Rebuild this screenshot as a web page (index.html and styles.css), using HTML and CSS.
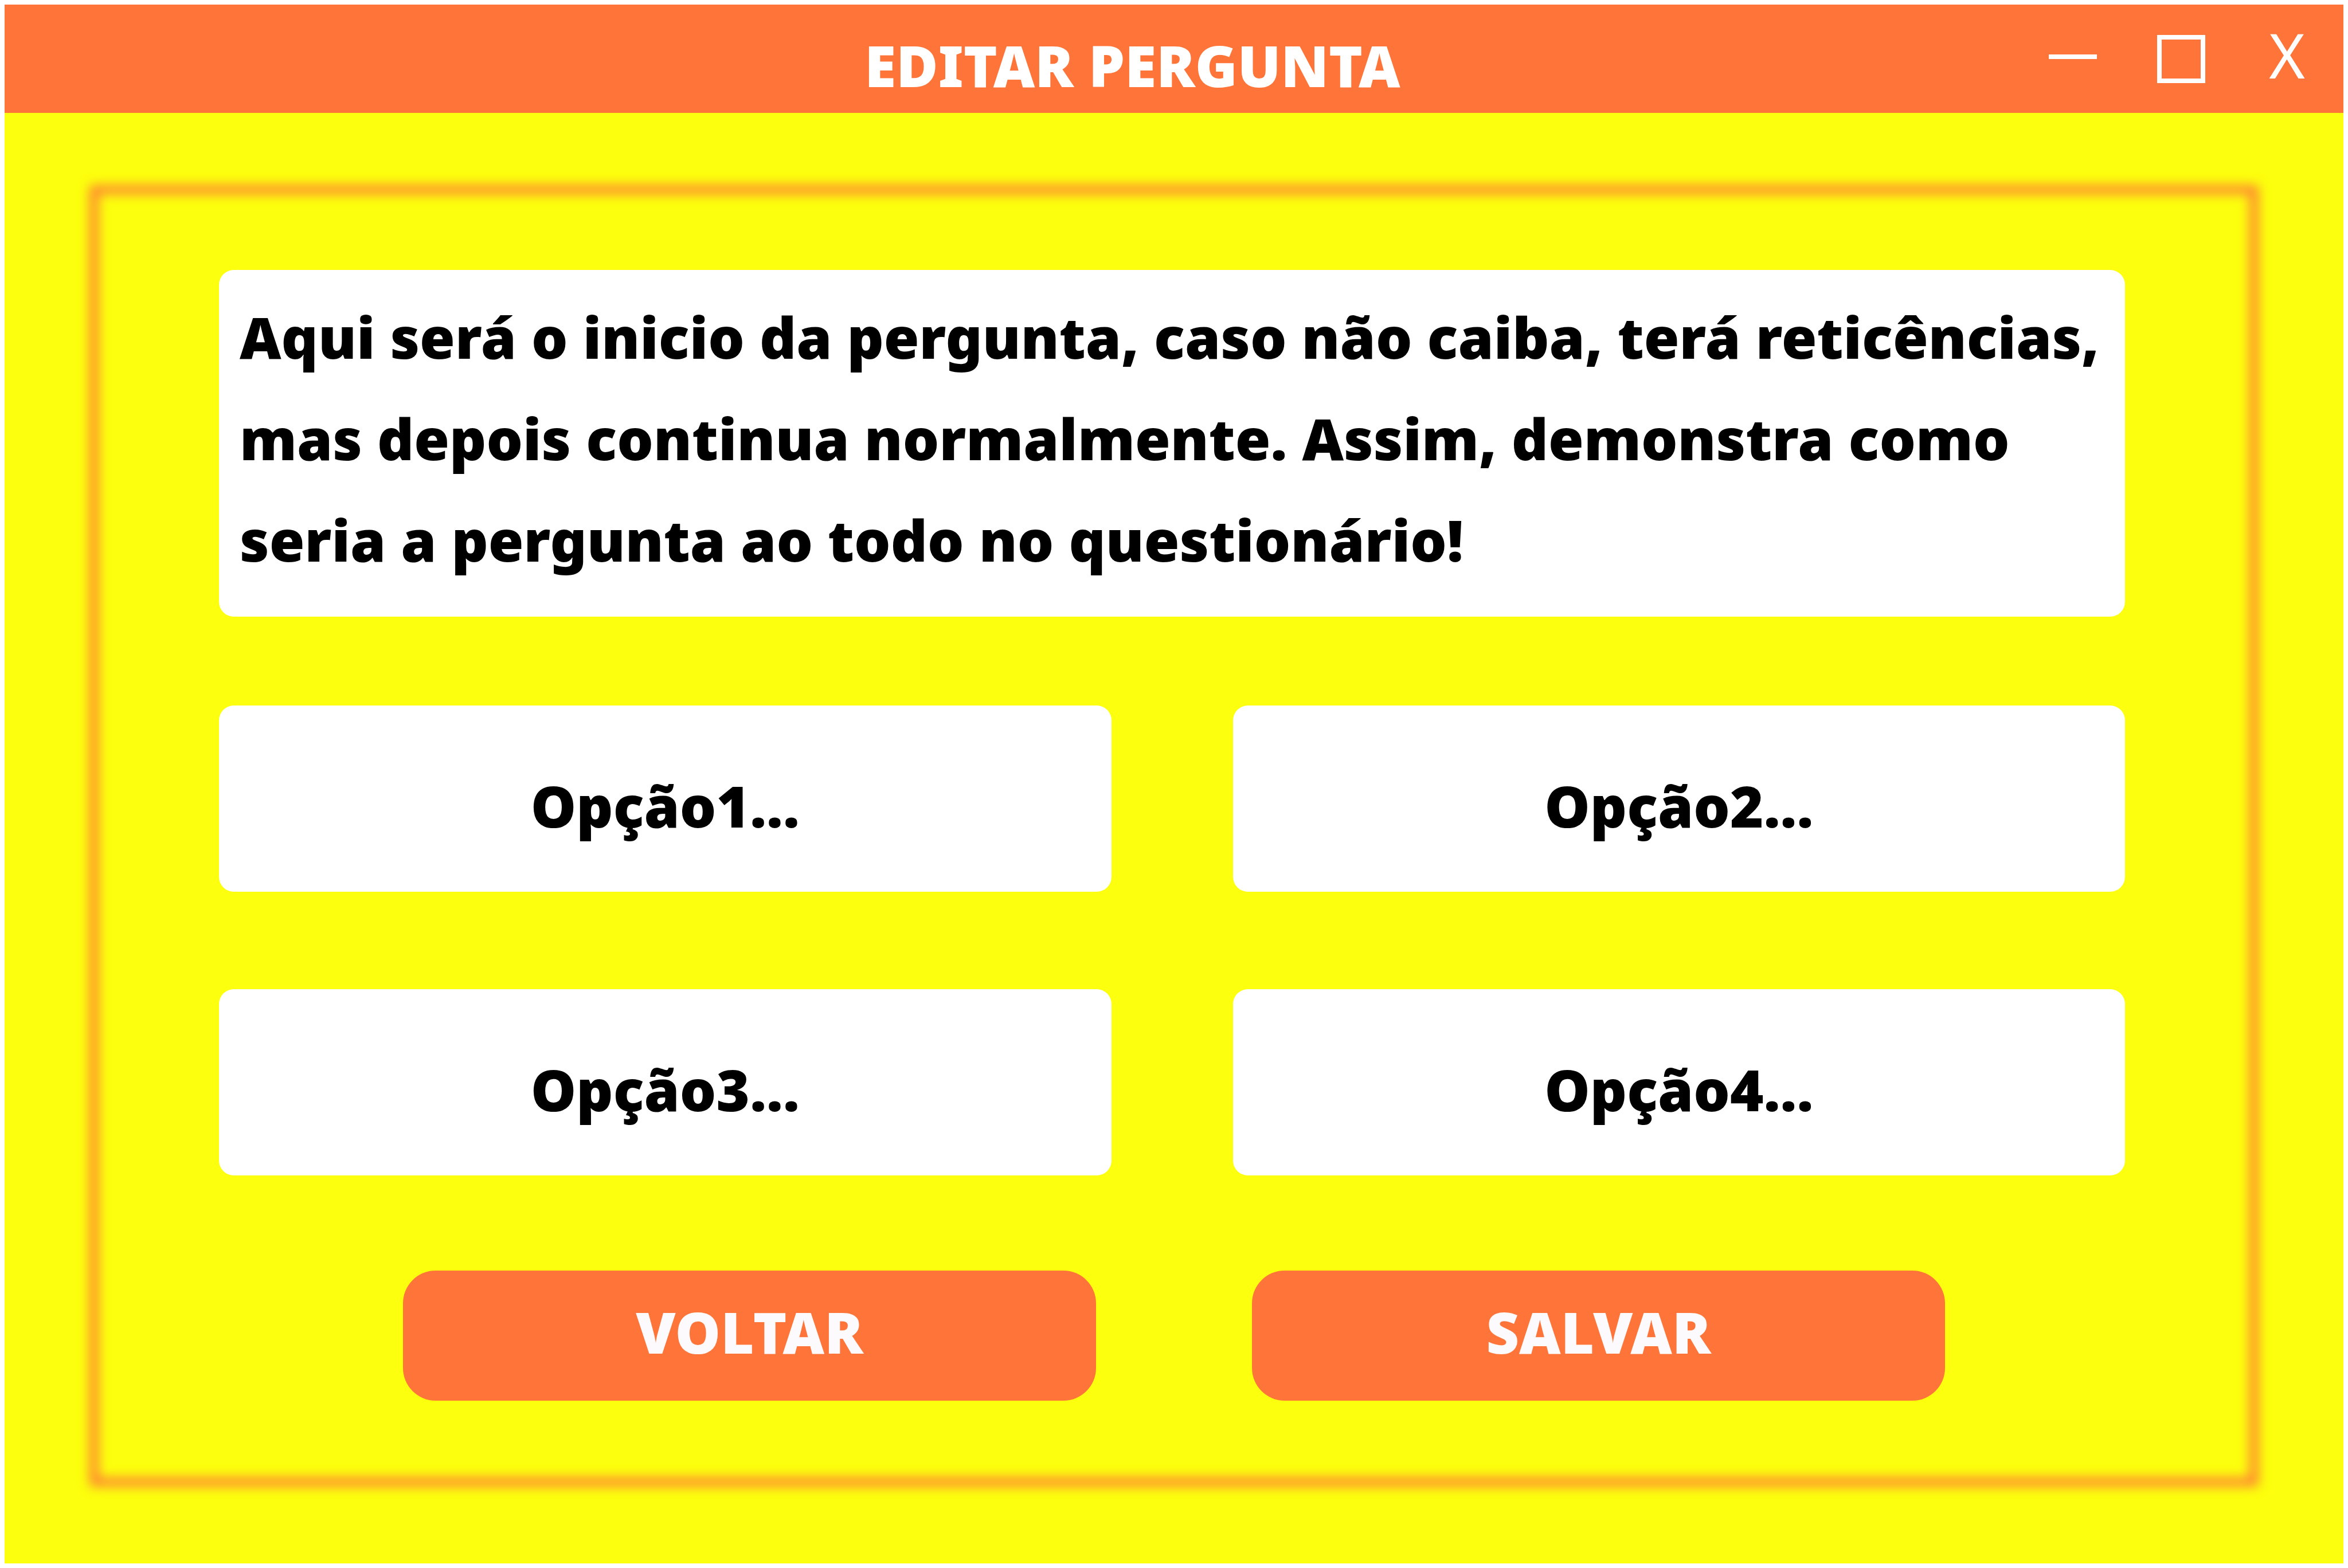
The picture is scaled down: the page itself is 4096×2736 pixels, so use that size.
FILE: index.html
```html
<!DOCTYPE html>
<html lang="pt-BR">
<head>
<meta charset="utf-8">
<title>Editar pergunta</title>
<link rel="stylesheet" href="styles.css">
</head>
<body>
<div class="window">
  <header class="titlebar">
    <h1 class="title">EDITAR PERGUNTA</h1>
    <div class="controls">
      <button class="control" type="button" aria-label="Minimizar">
        <svg class="icon" viewBox="0 0 84 84" aria-hidden="true"><rect x="0" y="34" width="84" height="8" fill="currentColor"/></svg>
      </button>
      <button class="control" type="button" aria-label="Maximizar">
        <svg class="icon" viewBox="0 0 84 84" aria-hidden="true"><rect x="4" y="4" width="76" height="76" fill="none" stroke="currentColor" stroke-width="8"/></svg>
      </button>
      <button class="control close" type="button" aria-label="Fechar">X</button>
    </div>
  </header>
  <main class="content">
    <form class="editor">
      <textarea class="field question" rows="3" aria-label="Pergunta" spellcheck="false">Aqui será o inicio da pergunta, caso não caiba, terá reticências, mas depois continua normalmente. Assim, demonstra como seria a pergunta ao todo no questionário!</textarea>
      <div class="options">
        <input class="field option" type="text" aria-label="Opção 1" value="Opção1...">
        <input class="field option" type="text" aria-label="Opção 2" value="Opção2...">
        <input class="field option" type="text" aria-label="Opção 3" value="Opção3...">
        <input class="field option" type="text" aria-label="Opção 4" value="Opção4...">
      </div>
      <div class="actions">
        <button class="action" type="button">VOLTAR</button>
        <button class="action" type="submit">SALVAR</button>
      </div>
    </form>
  </main>
</div>
</body>
</html>
```
FILE: styles.css
```css
:root {
  --orange: #ff7539;
  --yellow: #fcff0d;
  --font: "Noto Sans", "Open Sans", sans-serif;
}

*,
*::before {
  box-sizing: border-box;
}

body {
  margin: 0;
  background: #fff;
  font-family: var(--font);
}

button,
input,
textarea {
  margin: 0;
  border: 0;
  font-family: inherit;
}

.window {
  display: flex;
  flex-direction: column;
  min-height: 100vh;
  border: 8px solid #fff;
  background: var(--yellow);
}

/* Title bar */
.titlebar {
  display: flex;
  align-items: center;
  height: 189px;
  padding: 0 67px 0 369px;
  background: var(--orange);
  color: #fff;
}

.title {
  flex: 1;
  margin: 0;
  padding-top: 20px;
  font-size: 100px;
  font-weight: 900;
  line-height: 136px;
  text-align: center;
}

.controls {
  display: flex;
  gap: 105px;
}

.control {
  width: 84px;
  height: 84px;
  padding: 0;
  background: none;
  color: inherit;
}

.icon {
  display: block;
  width: 100%;
  height: 100%;
}

.close {
  display: flex;
  align-items: flex-start;
  justify-content: flex-end;
  width: 69px;
  font-size: 107px;
  font-weight: 400;
  line-height: 69px;
}

/* Framed editor */
.content {
  flex: 1;
  padding: 127px 149px 134px;
}

.editor {
  position: relative;
  padding: 147px 232px 149px 225px;
}

/* Soft glowing outline around the editor */
.editor::before {
  content: "";
  position: absolute;
  inset: 0;
  border: 14px solid var(--orange);
  filter: blur(10px);
  pointer-events: none;
}

.field {
  display: block;
  width: 100%;
  border-radius: 26px;
  background: #fff;
  color: #000;
  font-size: 100px;
  font-weight: 900;
}

.question {
  height: 605px;
  padding: 28px 36px;
  line-height: 177px;
  resize: none;
  overflow: hidden;
}

.options {
  display: grid;
  grid-template-columns: 1fr 1fr;
  gap: 170px 212px;
  margin-top: 155px;
}

.option {
  height: 325px;
  padding: 22px 36px 0;
  text-align: center;
}

.actions {
  display: grid;
  grid-template-columns: 1fr 1fr;
  gap: 272px;
  margin-top: 166px;
  padding: 0 314px 0 321px;
}

.action {
  height: 227px;
  padding: 0 0 16px;
  border-radius: 57px;
  background: var(--orange);
  color: #fcfafc;
  font-size: 100px;
  font-weight: 900;
}
```
